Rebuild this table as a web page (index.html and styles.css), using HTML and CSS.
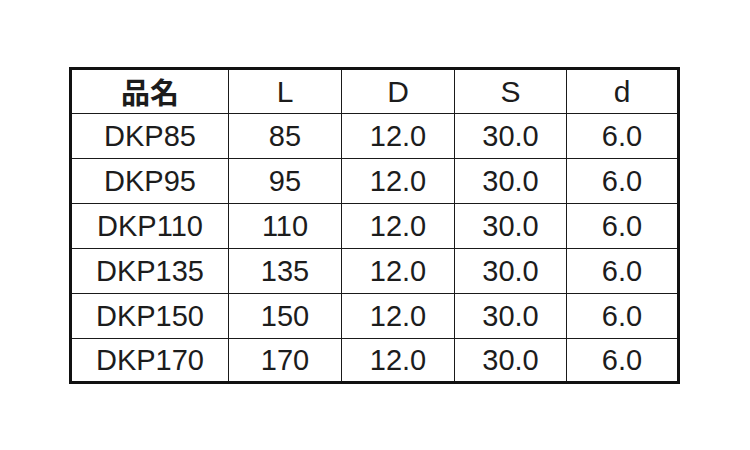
FILE: index.html
```html
<!DOCTYPE html>
<html lang="ja">
<head>
<meta charset="utf-8">
<link rel="stylesheet" href="styles.css">
</head>
<body>
<div class="spec">
  <div class="cell head jp">品名</div>
  <div class="cell head">L</div>
  <div class="cell head">D</div>
  <div class="cell head">S</div>
  <div class="cell head">d</div>

  <div class="cell">DKP85</div><div class="cell">85</div><div class="cell">12.0</div><div class="cell">30.0</div><div class="cell">6.0</div>
  <div class="cell">DKP95</div><div class="cell">95</div><div class="cell">12.0</div><div class="cell">30.0</div><div class="cell">6.0</div>
  <div class="cell">DKP110</div><div class="cell">110</div><div class="cell">12.0</div><div class="cell">30.0</div><div class="cell">6.0</div>
  <div class="cell">DKP135</div><div class="cell">135</div><div class="cell">12.0</div><div class="cell">30.0</div><div class="cell">6.0</div>
  <div class="cell">DKP150</div><div class="cell">150</div><div class="cell">12.0</div><div class="cell">30.0</div><div class="cell">6.0</div>
  <div class="cell">DKP170</div><div class="cell">170</div><div class="cell">12.0</div><div class="cell">30.0</div><div class="cell">6.0</div>
</div>
</body>
</html>
```

FILE: styles.css
```css
html, body {
  margin: 0;
  padding: 0;
  background: #ffffff;
}

body {
  width: 750px;
  height: 450px;
  overflow: hidden;
  padding-top: 67px;
  box-sizing: border-box;
}

.spec {
  margin-left: 69px;
  width: 611px;
  box-sizing: border-box;
  border: 3px solid #111111;
  background: #1a1a1a;
  display: grid;
  grid-template-columns: 156px 112px 112px 111px 110px;
  grid-template-rows: 43px 44px 44px 44px 44px 44px 42px;
  gap: 1px;
}

.cell {
  background: #ffffff;
  display: flex;
  align-items: center;
  justify-content: center;
  font-family: "Liberation Sans", Arial, sans-serif;
  font-size: 29px;
  color: #1c1c1c;
  line-height: 1;
}

.head {
  font-size: 30px;
}

.jp {
  font-family: "Noto Sans CJK JP", "Noto Sans CJK SC", sans-serif;
  font-weight: 700;
  font-size: 29px;
}
```
